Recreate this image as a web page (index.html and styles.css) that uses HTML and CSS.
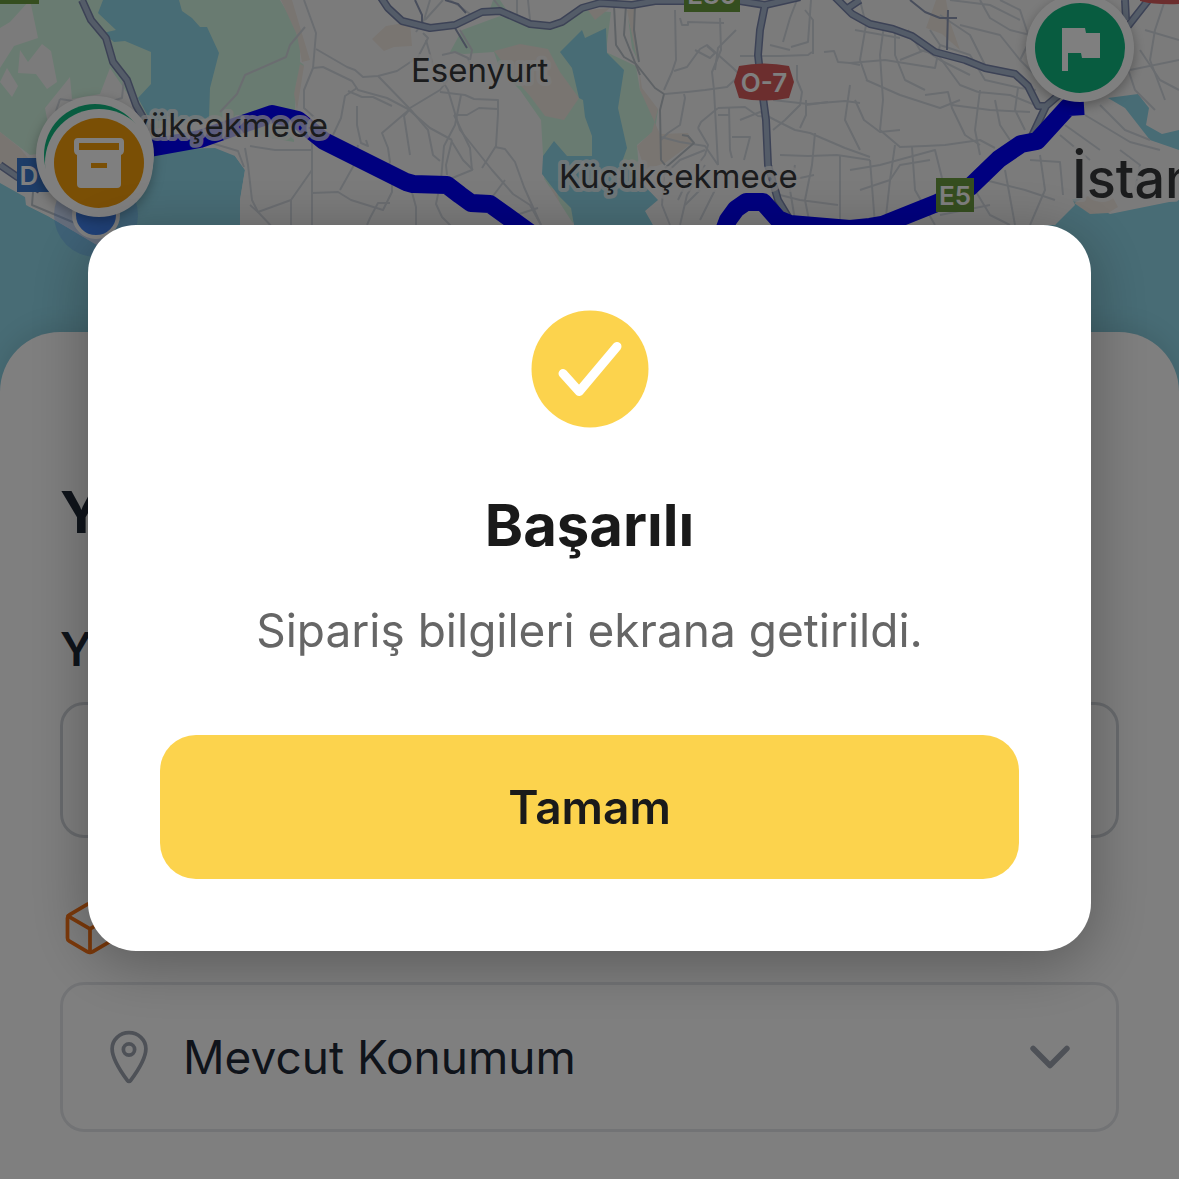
FILE: index.html
```html
<!DOCTYPE html>
<html lang="tr">
<head>
<meta charset="utf-8">
<meta name="viewport" content="width=device-width, initial-scale=1">
<title>Sipariş</title>
<link rel="stylesheet" href="styles.css">
</head>
<body>
<main class="screen">
  <svg class="map" viewBox="0 0 1179 392" preserveAspectRatio="xMidYMin slice" role="img" aria-label="Harita">
    <rect class="land" width="1179" height="392"/>
    <!-- parks and built-up areas -->
    <g class="green">
      <path d="M0 0H280L293 22L300 45V62L304 65L296 84L294 142L270 138L210 118L150 130L100 145L30 155L0 132Z"/>
      <path d="M450 52L462 30L500 16L545 28L580 10L611 12L606 52L636 66L640 90L658 110L655 130L637 145L640 180L600 200L570 225L560 225L558 205L545 190L541 120L520 90L500 70L494 52L464 54Z"/>
      <path d="M628 18L634 40L639 63L632 48Z"/><path d="M493 0H500L506 9H490Z"/>
    </g>
    <g class="sand">
      <path d="M281 0H292L303 37L310 60L302 62L297 35Z"/><path d="M300 64L304 66L297 110L294 94Z"/>
      <path d="M372 39L386 26L410 22L412 46L394 47L384 51Z"/>
      <path d="M494 51L520 44L548 49L560 72L579 98L564 120L545 116L530 96L516 80Z"/>
      <path d="M588 10L610 8L595 20Z"/><path d="M639 68L642 88L658 109L652 132L637 146L645 170L665 163L692 143L688 133L660 134L640 90Z"/>
      <path d="M540 182L556 190L566 225H548Z"/><path d="M926 28L936 0H946L950 22L960 50L942 34Z"/>
      <path d="M0 132L20 148L28 158L18 176L0 164Z"/><path d="M627 10L634 8L637 60Z"/>
      <path d="M240 208L248 212L244 225H240Z"/>
    </g>
    <g class="land">
      <path d="M0 28L10 22L30 0L38 38L14 46L0 68Z"/><path d="M20 50L28 62L42 44L51 51L57 82L47 89L36 74L18 73Z"/>
      <path d="M7 68L18 86L12 97L0 82Z"/><path d="M45 108L70 77L72 99L100 94L110 68L125 90L150 125L90 150L50 135Z"/>
    </g>
    <g class="water">
      <path d="M103 0H179L182 11L192 18L200 27H207L219 53L210 88L209 118L180 122L150 120L138 98L151 84V52L125 41L114 42L103 33L116 30L98 13Z"/>
      <path d="M0 183L25 197L26 205L48 216L97 245L110 238L70 205L150 154L170 149L215 148L235 156L245 170L240 200V225H1055L1068 200L1080 198L1110 214L1179 200V392H0Z"/>
      <path d="M560 52L582 30L585 38L606 28L607 53L624 70L618 108L627 148L622 162L658 200L645 211L653 225H574L571 208L559 196L542 174L543 156L554 141L567 156H592V136L585 117L583 100L579 98L572 68Z"/>
      <path d="M1108 98L1138 94L1149 108L1146 125L1162 134L1179 130V150L1150 140L1125 108Z"/>
    </g>
    <path class="land" d="M240 225V200L245 170L235 156L250 150L545 180L574 225Z"/>
    <path class="land" d="M650 214L700 170H1060L1075 205L1055 225H653Z"/>
    <path class="sand" d="M1074 203L1090 195L1112 196L1118 207L1108 213L1090 214Z"/>
    <path class="land" d="M25 188L100 232L97 245L48 216L28 206Z"/>

    <!-- local streets -->
    <g class="street">
      <path d="M304 0L316 33L313 68L304 90V108L315 118"/><path d="M305 27L290 45L286 57L245 75L237 94L220 112"/>
      <path d="M316 49L347 67L355 70L363 77L378 76L397 71L418 57L428 38L423 33"/><path d="M313 68L323 67L352 81L358 90L387 98L408 109L430 128L452 140"/>
      <path d="M378 76L410 109L428 130L433 155L440 161"/><path d="M348 91L362 97L373 97L392 106"/>
      <path d="M357 88L345 96L341 118L333 135"/><path d="M357 106V125L361 143L368 146L366 140"/>
      <path d="M410 109L382 133L388 148L390 162L384 178"/><path d="M410 108L440 90L448 80M410 109L404 116L410 155"/>
      <path d="M426 40L433 65L448 90L460 130L480 155L492 170L513 194L530 205L541 225"/>
      <path d="M440 92L465 95L474 99L498 100V114L496 146L482 168"/><path d="M498 109L479 108L467 115H454"/>
      <path d="M461 95L455 125L444 146L441 180L436 204L442 217L455 230"/><path d="M454 115L470 148L472 170L445 181"/>
      <path d="M452 140L446 165L447 175M452 142L463 160L473 170"/><path d="M495 147L505 149L515 162L524 187L541 225"/>
      <path d="M505 180L490 200M513 216L538 208"/><path d="M312 225V140"/><path d="M250 146L275 150H313"/>
      <path d="M312 193L338 192L351 200L383 210L392 192V180"/><path d="M390 203H378L370 218L367 225"/>
      <path d="M340 190L354 165L358 145"/><path d="M291 225V200L312 170M291 200L258 212L250 205"/>
      <path d="M410 185L416 207V225"/><path d="M430 0L424 20L416 32M443 0L425 20"/>
      <path d="M450 0L462 8L470 14"/><path d="M517 0V18M528 0L530 20M494 0L502 10"/>
      <path d="M245 148L248 165L252 200L258 212L275 230"/><path d="M208 142L238 151L244 167"/>
      <path d="M60 99L56 111M60 99L100 105L122 98L124 78"/><path d="M470 60L472 50L460 30"/>
      <path d="M442 55L455 52L468 58L472 70"/>
      <path d="M675 10L676 60L672 72L664 90"/><path d="M680 18L682 25H688V22L724 23"/>
      <path d="M720 18L721 50L712 72L714 90L718 165"/><path d="M736 30L718 48L715 70"/>
      <path d="M674 71L687 67L700 49L707 45L733 68L740 75L727 87L705 90L687 92L665 94"/>
      <path d="M695 50L710 58L715 53L707 46"/><path d="M684 94L685 98L680 125L668 133L661 140"/>
      <path d="M718 108L745 107L758 116L770 117"/><path d="M729 107L730 150L732 158"/>
      <path d="M698 128L701 122L718 108M698 128L708 145L705 155L690 175L678 200"/>
      <path d="M661 137L680 142L705 146L718 165"/><path d="M718 115H730M732 137H750L744 160"/>
      <path d="M705 150L680 160L664 175L662 205L670 225M715 190L700 220M705 165L687 195L680 225"/>
      <path d="M685 205L700 190M740 120L760 112L775 120L795 130L810 133L845 148L870 157"/>
      <path d="M773 100L808 104L845 101L860 103"/><path d="M806 100V115L800 128M806 105L828 102"/>
      <path d="M773 130L785 120L800 105L802 92L797 80L797 65"/>
      <path d="M740 56H780L808 55L812 52"/><path d="M791 47L808 42L811 0M797 0L790 18L783 42"/>
      <path d="M824 52L834 51L838 62L850 63L860 65"/><path d="M813 54V20L805 10M770 45L790 50"/>
      <path d="M780 155L808 156L837 155L870 160M780 180L800 178L814 175"/>
      <path d="M815 133L812 165L805 200L810 225M840 155V225M780 195L800 200L838 205"/>
      <path d="M795 165L790 190L795 220M855 100L864 120L880 132L900 130"/>
      <path d="M860 0L866 25L860 60L867 80M884 25L880 55L883 100L880 130"/>
      <path d="M850 63L885 60L935 68L940 45L930 30"/><path d="M866 80L900 95L940 108L960 100"/>
      <path d="M895 30V55L905 80L925 90M900 60L925 50L940 60L970 75"/>
      <path d="M908 30L920 50L938 55L960 85L978 92M940 45L970 55L985 80L1020 88L1036 90"/>
      <path d="M880 130L900 147L925 146L945 145L980 140L995 148"/><path d="M925 95L948 92L952 108L965 135L980 145"/>
      <path d="M850 170L880 165L935 150L942 178M860 190L890 180L900 165L930 160"/>
      <path d="M870 160L875 225M895 145L890 180L885 225M912 147L915 190L935 225"/>
      <path d="M978 92L1010 95L1035 105M980 90L975 130L980 155M995 100L1000 125L1010 140"/>
      <path d="M1018 88L1015 110L1025 130M952 105L990 110L1030 112"/>
      <path d="M975 190L990 215L1010 225M985 180L1025 190L1055 200M1030 160L1060 162L1063 195"/>
      <path d="M1040 155L1045 190L1030 225M1005 170L1015 225M1060 135L1090 160M1065 125L1100 150"/>
      <path d="M1085 115L1110 130L1130 142L1160 150M1100 105L1125 130L1150 140"/>
      <path d="M1125 60L1135 90L1155 110M1140 50L1160 80L1179 90M1145 30L1179 40M1130 70L1179 60"/>
      <path d="M980 0L990 18L1010 30L1030 35M950 0L990 5L1020 20M1000 0L1020 10L1030 40L1020 60"/>
      <path d="M960 25L1000 35L1020 60L1040 80M940 15L970 35L985 65"/><path d="M1165 0L1155 30L1150 60L1165 100"/>
      <path d="M850 85L845 120L860 150M855 30L900 38M1120 150L1140 165L1135 190M940 215L990 205"/>
      <path class="grey" d="M614 5L616 45L624 57L636 64L655 88L664 94L660 110L661 160L665 165"/>
      <path class="grey" d="M626 5L624 35L636 65L640 75"/><path class="grey" d="M635 5L634 30L639 62"/>
      <path class="grey" d="M682 135L688 136L694 143L665 168"/>
      <path class="grey" d="M33 192L32 205L75 223L90 230"/>
      <path class="navy" d="M415 0L422 15V22M445 0L458 4L466 13M455 28L467 48M910 0L925 12L940 18H957M948 10L947 50"/>
    </g>
    <!-- motorways -->
    <g class="motorway-edge">
      <path id="m1" d="M82 0L91 20L106 38L113 62L127 80L136 105L150 130"/>
      <path id="m2" d="M380 -4L388 8L402 21L430 28L455 25L482 12L500 11L530 24L550 26L562 22L582 8L600 3L632 5L655 1H740L765 5L800 -3"/>
      <path id="m3" d="M832 -6L852 14L870 24L893 29L912 36L935 52L965 60L985 68L1015 74L1028 86L1038 106H1046L1060 94M1046 106L1032 136"/>
      <path id="m4" d="M765 5L760 30L758 55L762 90L766 120L768 165L778 200L790 220"/>
      <path id="m5" d="M1150 -2L1128 26M1125 0L1126 20M0 165L16 176L40 190M848 8L860 0"/>
    </g>
    <g class="motorway"><use href="#m1"/><use href="#m2"/><use href="#m3"/><use href="#m4"/><use href="#m5"/></g>

    <path class="route" d="M150 148L200 139L240 125L272 114L298 120L324 141L406 182L413 184L447 185L460 195L471 203L490 204L540 240"/>
    <path class="route" d="M722 236L728 220L736 209L746 202H763L778 219L790 224L850 229L870 227L882 225L937 203L970 187L999 159L1021 144L1037 141L1068 107L1084 106"/>

    <!-- road numbers -->
    <g class="shield">
      <rect class="shield-green" width="39" height="4"/>
      <rect class="shield-green" x="684" y="-22" width="56" height="34"/><text x="712" y="4">E80</text>
      <rect class="shield-green" x="936" y="178" width="38" height="34"/><text x="955" y="205">E5</text>
      <rect class="shield-blue" x="17" y="158" width="60" height="34"/><text x="29" y="185">D</text>
      <path class="shield-red" d="M739 66Q764 61 789 66L794 82L789 98Q764 103 739 98L734 82Z"/><text x="764" y="92">O-7</text>
      <path class="shield-red" d="M1140 0H1179V4Q1155 5 1140 1Z"/>
    </g>
    <g class="place">
      <text x="411" y="82">Esenyurt</text>
      <text x="328" y="137" text-anchor="end">Büyükçekmece</text>
      <text x="559" y="188">Küçükçekmece</text>
      <text class="city" x="1072" y="198">İstanbul</text>
    </g>

    <!-- current position and order markers -->
    <circle class="halo" cx="96" cy="215" r="42"/>
    <circle class="dot" cx="96" cy="215" r="22"/>
    <g class="marker">
      <circle fill="#fff" cx="95" cy="155" r="59"/><circle fill="#10b981" cx="95" cy="155" r="51"/>
      <circle fill="#fff" cx="99" cy="163" r="54"/><circle fill="#f59e0b" cx="99" cy="163" r="45"/>
      <path fill="#fff" fill-rule="evenodd" d="M78 138H120Q124 138 124 142V150Q124 154 121 155V184Q121 188 117 188H81Q77 188 77 184V155Q74 154 74 150V142Q74 138 78 138ZM79 143V150H119V143ZM91 163V168H107V163Z"/>
    </g>
    <g class="marker">
      <circle fill="#fff" cx="1080" cy="48" r="54"/><circle fill="#10b981" cx="1080" cy="48" r="45"/>
      <path fill="#fff" d="M1062 28H1085L1086 33H1100V58H1082L1081 53H1068V71H1062Z"/>
    </g>
  </svg>

  <form class="sheet">
    <h1 class="sheet-title">Y</h1>
    <label class="field-label" for="load">Y</label>
    <input class="field" id="load" type="text">
    <div class="section-head">
      <svg class="icon cube" viewBox="0 0 512 512" aria-hidden="true">
        <path d="M448 341.37V170.61A32 32 0 00432.11 143l-152-88.46a47.94 47.94 0 00-48.24 0L79.89 143A32 32 0 0064 170.61v170.76A32 32 0 0079.89 369l152 88.46a48 48 0 0048.24 0l152-88.46A32 32 0 00448 341.37z"/>
        <path d="M69 153.99l187 110 187-110M256 463.99v-200"/>
      </svg>
    </div>
    <div class="picker">
      <svg class="icon pin" viewBox="0 0 512 512" aria-hidden="true">
        <path d="M256 48c-79.5 0-144 61.39-144 137 0 87 96 224.87 131.25 272.49a15.77 15.77 0 0025.5 0C304 409.89 400 272.07 400 185c0-75.61-64.5-137-144-137z"/>
        <circle cx="256" cy="192" r="48"/>
      </svg>
      <select class="picker-select" aria-label="Konum"><option>Mevcut Konumum</option></select>
      <svg class="icon chevron" viewBox="0 0 512 512" aria-hidden="true"><path d="M112 184l144 144 144-144"/></svg>
    </div>
  </form>
</main>

<div class="overlay">
  <section class="modal" role="dialog" aria-modal="true" aria-labelledby="modal-title">
    <svg class="modal-icon" viewBox="0 0 512 512" aria-hidden="true">
      <circle cx="256" cy="256" r="208"/><path d="M352 176L217.6 336 160 272"/>
    </svg>
    <h2 class="modal-title" id="modal-title">Başarılı</h2>
    <p class="modal-text">Sipariş bilgileri ekrana getirildi.</p>
    <button class="modal-button" type="button">Tamam</button>
  </section>
</div>
</body>
</html>
```
FILE: styles.css
```css
* { box-sizing: border-box; }

body {
  margin: 0;
  font-family: Inter, "Liberation Sans", sans-serif;
  color: #1f2937;
}

.screen {
  display: flex;
  flex-direction: column;
  min-height: 100vh;
}

/* Map */
.map { display: block; width: 100%; height: 392px; }
.land { fill: #f7f7f7; }
.green { fill: #d3f6e2; }
.sand { fill: #f2eae2; }
.water { fill: #90d8ea; }
.street { fill: none; stroke: #d5dae1; stroke-width: 2; stroke-linejoin: round; }
.grey { stroke: #bfc6cd; }
.navy { stroke: #929db8; }
.motorway-edge { fill: none; stroke: #7985ac; stroke-width: 8; stroke-linejoin: round; }
.motorway { fill: none; stroke: #a9b9d0; stroke-width: 5; stroke-linejoin: round; }
.route { fill: none; stroke: #0000ff; stroke-width: 18; stroke-linejoin: round; }

.shield { fill: #fff; font-size: 26px; font-weight: 600; text-anchor: middle; }
.shield-green { fill: #6b9c3f; }
.shield-blue { fill: #3c7ad0; }
.shield-red { fill: #d95d5d; }

.place {
  fill: #36383b;
  stroke: #f7f7f7;
  stroke-opacity: 0.75;
  stroke-width: 8;
  stroke-linejoin: round;
  paint-order: stroke;
  font-size: 33px;
}
.city { font-size: 54px; font-weight: 500; }

.halo { fill: #4285f4; fill-opacity: 0.25; }
.dot { fill: #4285f4; stroke: #fff; stroke-width: 4; }
.marker { filter: drop-shadow(0 4px 6px rgba(0, 0, 0, 0.3)); }

/* Bottom sheet */
.sheet {
  position: relative;
  flex: 1;
  display: flex;
  flex-direction: column;
  margin-top: -60px;
  padding: 144px 60px 36px;
  border-radius: 60px 60px 0 0;
  background: #fff;
  box-shadow: 0 -6px 24px rgba(0, 0, 0, 0.1);
}
.sheet-title { margin: 0 0 72px; font-size: 58px; line-height: 72px; font-weight: 700; }
.field-label { margin-bottom: 24px; font-size: 46px; line-height: 58px; font-weight: 600; }
.field {
  width: 100%;
  height: 136px;
  padding: 0 36px;
  border: 3px solid #d1d5db;
  border-radius: 24px;
  background: #fff;
  font: inherit;
  font-size: 46px;
}
.section-head { display: flex; margin: 60px 0 24px; }
.picker {
  display: flex;
  align-items: center;
  gap: 24px;
  height: 150px;
  padding: 0 36px;
  border: 3px solid #e5e7eb;
  border-radius: 24px;
}
.picker-select {
  flex: 1;
  min-width: 0;
  padding: 0;
  border: 0;
  appearance: none;
  background: none;
  color: inherit;
  font: inherit;
  font-size: 46px;
  line-height: 60px;
}
.icon {
  flex: none;
  width: 60px;
  height: 60px;
  fill: none;
  stroke-width: 32;
  stroke-linecap: round;
  stroke-linejoin: round;
}
.cube { stroke: #f97316; }
.pin { stroke: #9ca3af; }
.chevron { stroke: #9ca3af; stroke-width: 48; }

/* Dialog */
.overlay {
  position: fixed;
  inset: 0;
  display: flex;
  align-items: center;
  justify-content: center;
  padding: 0 88px 3px;
  background: rgba(0, 0, 0, 0.5);
}
.modal {
  display: flex;
  flex-direction: column;
  align-items: center;
  width: 100%;
  padding: 72px;
  border-radius: 48px;
  background: #fff;
  box-shadow: 0 12px 60px rgba(0, 0, 0, 0.3);
  text-align: center;
}
.modal-icon { width: 144px; height: 144px; fill: #fcd34d; }
.modal-icon path {
  fill: none;
  stroke: #fff;
  stroke-width: 32;
  stroke-linecap: round;
  stroke-linejoin: round;
}
.modal-title {
  margin: 48px 0 36px;
  color: #1a1a1a;
  font-size: 58px;
  line-height: 72px;
  font-weight: 700;
}
.modal-text { margin: 0 0 72px; color: #666; font-size: 46px; line-height: 66px; }
.modal-button {
  width: 100%;
  height: 144px;
  border: 0;
  border-radius: 36px;
  background: #fcd34d;
  color: #1a1a1a;
  font: inherit;
  font-size: 46px;
  font-weight: 600;
}
```
